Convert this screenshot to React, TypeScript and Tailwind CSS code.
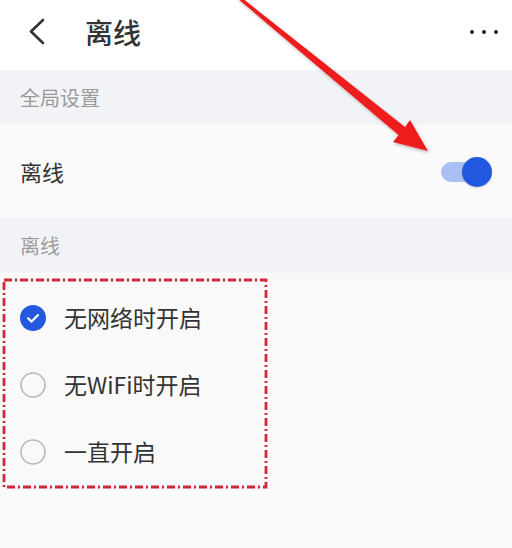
import { useState } from 'react';

const FONT = '"Noto Sans CJK SC", "Noto Sans", sans-serif';

function Radio({ checked }: { checked: boolean }) {
  if (checked) {
    return (
      <svg width="26" height="26" viewBox="0 0 26 26">
        <circle cx="13" cy="13" r="13" fill="#2358df" />
        <path d="M8 13.2 L11.6 16.6 L18 10" fill="none" stroke="#fff" strokeWidth="2.2" strokeLinecap="round" strokeLinejoin="round" />
      </svg>
    );
  }
  return (
    <svg width="26" height="26" viewBox="0 0 26 26">
      <circle cx="13" cy="13" r="12" fill="none" stroke="#b8b8b8" strokeWidth="1.6" />
    </svg>
  );
}

export default function App() {
  const [mode, setMode] = useState(0);
  const [offline, setOffline] = useState(true);
  const options = ['无网络时开启', '无WiFi时开启', '一直开启'];

  return (
    <div className="relative w-[512px] h-[548px] overflow-hidden bg-[#f9f9f9] flex flex-col" style={{ fontFamily: FONT }}>
      {/* Header */}
      <div className="h-[70px] bg-white flex items-center shrink-0 pb-[6px]">
        <svg width="60" height="64" viewBox="0 0 60 64" className="shrink-0">
          <path d="M43 20 L31 31.5 L43 43" fill="none" stroke="#333" strokeWidth="2.6" strokeLinecap="round" strokeLinejoin="round" />
        </svg>
        <h1 className="ml-[25px] text-[28px] font-medium text-[#333] leading-none">离线</h1>
        <div className="ml-auto mr-[14px] flex items-center gap-[8px]">
          <span className="w-[4px] h-[4px] rounded-full bg-[#222]" />
          <span className="w-[4px] h-[4px] rounded-full bg-[#222]" />
          <span className="w-[4px] h-[4px] rounded-full bg-[#222]" />
        </div>
      </div>

      {/* Section: 全局设置 */}
      <div className="h-[55px] bg-[#f2f3f7] flex items-center px-5 shrink-0">
        <span className="text-[20px] text-[#9a9a9a]">全局设置</span>
      </div>

      <div className="h-[93px] bg-[#fafafa] flex items-center pl-5 pr-[20px] shrink-0">
        <span className="text-[22px] text-[#333]">离线</span>
        <button
          onClick={() => setOffline(!offline)}
          className="ml-auto relative w-[51px] h-[30px] flex items-center"
        >
          <span className={`absolute left-0 right-[6px] h-[20px] rounded-full ${offline ? 'bg-[#aac0f4]' : 'bg-[#d0d0d0]'}`} />
          <span className={`absolute w-[30px] h-[30px] rounded-full shadow-sm ${offline ? 'right-0 bg-[#2158e0]' : 'left-0 bg-white'}`} />
        </button>
      </div>

      {/* Section: 离线 */}
      <div className="h-[55px] bg-[#f2f3f7] flex items-center px-5 shrink-0">
        <span className="text-[20px] text-[#9a9a9a]">离线</span>
      </div>

      <div className="flex-1 bg-[#f9f9f9] pt-[11px]">
        {options.map((label, i) => (
          <div
            key={label}
            onClick={() => setMode(i)}
            className="h-[67px] flex items-center pl-[20px] gap-[18px] cursor-pointer"
          >
            <Radio checked={mode === i} />
            <span className="text-[23px] text-[#333]">{label}</span>
          </div>
        ))}
      </div>

      {/* Annotation: red arrow and dash-dot frame */}
      <svg className="absolute inset-0 pointer-events-none" width="512" height="548" viewBox="0 0 512 548">
        <defs>
          <filter id="sh" x="-20%" y="-20%" width="140%" height="140%">
            <feDropShadow dx="1" dy="2" stdDeviation="1.5" floodColor="#000" floodOpacity="0.25" />
          </filter>
        </defs>
        <polygon
          points="237,-2 242,-2 405,127 410,120 428,151 393,142 398.5,135"
          fill="#ee1c1c"
          filter="url(#sh)"
        />
        <rect
          x="4"
          y="280"
          width="262"
          height="207"
          fill="none"
          stroke="#d02838"
          strokeWidth="2.8"
          strokeDasharray="8 3 2 3"
        />
      </svg>
    </div>
  );
}
